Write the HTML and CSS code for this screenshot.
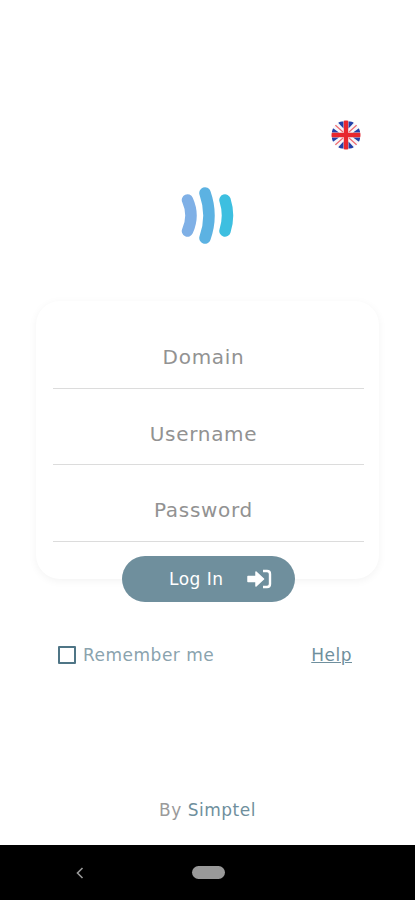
FILE: index.html

```html
<!DOCTYPE html>
<html lang="en">
<head>
    <meta charset="UTF-8">
    <title>Simptel - Log In</title>
    <link rel="stylesheet" href="styles.css">
</head>
<body>

<div class="screen">
    <div class="lang">
        <svg class="flag" viewBox="0 0 30 30" width="30" height="30">
            <defs><clipPath id="round"><circle cx="15" cy="15" r="14.5"/></clipPath></defs>
            <g clip-path="url(#round)">
                <rect width="30" height="30" fill="#f6f6fa"/>
                <path d="M6 1.5 L12.5 1.5 L12.5 8.5 Z M24 1.5 L17.5 1.5 L17.5 8.5 Z M6 28.5 L12.5 28.5 L12.5 21.5 Z M24 28.5 L17.5 28.5 L17.5 21.5 Z" fill="#2340a8"/>
                <path d="M1 7.5 L8 12.5 L1 12.5 Z M29 7.5 L22 12.5 L29 12.5 Z M1 22.5 L8 17.5 L1 17.5 Z M29 22.5 L22 17.5 L29 17.5 Z" fill="#2340a8"/>
                <path d="M3 4 L12 12 M27 4 L18 12 M3 26 L12 18 M27 26 L18 18" stroke="#ee6a70" stroke-width="1.2"/>
                <path d="M15 0 V30 M0 15 H30" stroke="#e8262e" stroke-width="4.4"/>
            </g>
        </svg>
    </div>

    <div class="logo">
        <svg viewBox="0 0 54 58" width="54" height="58">
            <g fill="none" stroke-width="11.5" stroke-linecap="round">
                <path d="M6.5 13 Q13.5 28.5 6.5 44" stroke="#7fb0e6"/>
                <path d="M24 6 Q32 28.5 24 51" stroke="#5cb2e2"/>
                <path d="M44 13 Q49 28.5 44 44" stroke="#3dbfe0"/>
            </g>
        </svg>
    </div>

    <form class="card">
        <div class="field">Domain</div>
        <div class="field">Username</div>
        <div class="field">Password</div>
    </form>

    <button class="login" type="button">
        <span>Log In</span>
        <svg viewBox="0 0 25 20" width="25" height="20">
            <path d="M1 7.5 H9 V3 L16.5 10 L9 17 V12.5 H1 Z" fill="#fff" stroke="#fff" stroke-width="1.5" stroke-linejoin="round"/>
            <path d="M16 2 H20 Q23 2 23 5 V15 Q23 18 20 18 H16" fill="none" stroke="#fff" stroke-width="2.4"/>
        </svg>
    </button>

    <div class="options">
        <label class="remember"><span class="check"></span>Remember me</label>
        <a class="help" href="#">Help</a>
    </div>

    <div class="by">By <span>Simptel</span></div>

    <div class="navbar">
        <svg class="back" viewBox="0 0 8 12" width="8" height="12">
            <path d="M6.5 1 L1.5 6 L6.5 11" fill="none" stroke="#9a9a9a" stroke-width="1.6"/>
        </svg>
        <div class="home"></div>
    </div>
</div>

</body>
</html>
```

FILE: styles.css

```css
* {
    box-sizing: border-box;
}
body {
    margin: 0;
    font-family: "DejaVu Sans", Inter, sans-serif;
    background-color: #fff;
    color: #808080;
}
.screen {
    width: 415px;
    height: 900px;
    display: flex;
    flex-direction: column;
    overflow: hidden;
}
.screen > * {
    flex-shrink: 0;
}
.lang {
    display: flex;
    justify-content: flex-end;
    padding: 120px 54px 0 0;
    height: 150px;
}
.logo {
    display: flex;
    justify-content: center;
    margin-top: 37px;
    height: 58px;
}
.card {
    width: 343px;
    height: 278px;
    margin: 56px 0 0 36px;
    padding: 11px 15px 0 17px;
    background-color: #fff;
    border-radius: 24px;
    box-shadow: 0 2px 8px rgba(0, 0, 0, 0.05);
}
.field {
    height: 76.5px;
    padding: 33px 10px 0 0;
    text-align: center;
    font-size: 20px;
    letter-spacing: 0.7px;
    line-height: 24px;
    color: #929292;
    border-bottom: 1px solid #dcdcdc;
}
.login {
    width: 173px;
    height: 46px;
    margin: -23px 0 0 122px;
    padding: 0 23px 0 47px;
    position: relative;
    display: flex;
    align-items: center;
    justify-content: space-between;
    border: 0;
    border-radius: 23px;
    background-color: #6f8f9d;
    color: #fff;
    font-family: inherit;
    font-size: 17px;
    letter-spacing: 0.5px;
}
.options {
    display: flex;
    justify-content: space-between;
    align-items: center;
    margin-top: 44px;
    padding: 0 63px 0 58px;
    height: 18px;
    font-size: 17px;
    letter-spacing: 0.5px;
    color: #8aa3ae;
}
.remember {
    display: flex;
    align-items: center;
    gap: 7px;
}
.check {
    width: 18px;
    height: 18px;
    border: 2px solid #4f7586;
    border-radius: 1px;
}
.help {
    color: #6f8f9d;
    text-decoration: underline;
}
.by {
    margin-top: 136px;
    height: 20px;
    line-height: 20px;
    text-align: center;
    font-size: 17px;
    letter-spacing: 0.5px;
    color: #9a9a9a;
}
.by span {
    color: #6f8f9d;
}
.navbar {
    margin-top: 25px;
    height: 55px;
    background-color: #000;
    display: flex;
    align-items: center;
    padding: 0 0 0 76px;
}
.back {
    margin-right: 108px;
}
.home {
    width: 33px;
    height: 13px;
    border-radius: 7px;
    background-color: #999;
}
```
